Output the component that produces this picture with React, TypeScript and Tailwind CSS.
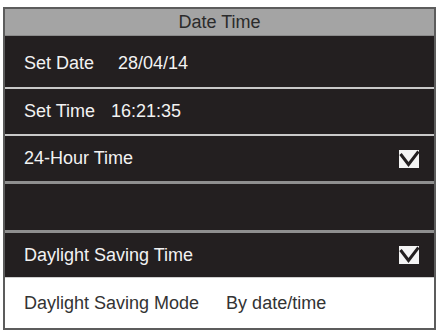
import React from 'react';

const CheckBox: React.FC = () => (
    <svg width="20" height="18" viewBox="0 0 20 18" className="block">
        <rect x="0" y="0" width="20" height="18" fill="#f4f4f4" />
        <polyline points="1.5,4 9.5,14.5 19.5,1.5" fill="none" stroke="#231f20" strokeWidth="3" />
    </svg>
);

const Separator: React.FC<{ thick?: boolean }> = ({ thick }) => (
    <div className={thick ? 'h-[3px] bg-[#8f8f8f]' : 'h-[2px] bg-[#c9c9c9]'} />
);

export default function App() {
    return (
        <div className="w-[437px] h-[331px] bg-white pt-[7px] pl-[3px] font-['Liberation_Sans',Arial,sans-serif] text-[18px]">
            <div className="w-[433px] h-[323px] border-2 border-[#5c5c5c] flex flex-col bg-[#231f20]">
                {/* header */}
                <div className="h-[27px] bg-[#a4a4a4] border-b border-[#8a8a8a] flex items-center justify-center text-[#2b2b2b] leading-none">
                    Date Time
                </div>

                <div className="h-[51px] flex items-center pl-[19px] pt-[4px] text-[#f2f2f2]">
                    <span>Set Date</span>
                    <span className="ml-[24px]">28/04/14</span>
                </div>
                <Separator />

                <div className="h-[45px] flex items-center pl-[19px] text-[#f2f2f2]">
                    <span>Set Time</span>
                    <span className="ml-[16px]">16:21:35</span>
                </div>
                <Separator />

                <div className="h-[45px] flex items-center justify-between pl-[19px] pr-[15px] text-[#f2f2f2]">
                    <span>24-Hour Time</span>
                    <CheckBox />
                </div>
                <Separator thick />

                <div className="h-[46px]" />
                <Separator thick />

                <div className="h-[44px] flex items-center justify-between pl-[19px] pr-[15px] text-[#f2f2f2]">
                    <span>Daylight Saving Time</span>
                    <CheckBox />
                </div>

                <div className="flex-1 bg-white border-t border-[#cfcfcf] flex items-center pl-[19px] text-[#333333]">
                    <span>Daylight Saving Mode</span>
                    <span className="ml-[27px]">By date/time</span>
                </div>
            </div>
        </div>
    );
}
